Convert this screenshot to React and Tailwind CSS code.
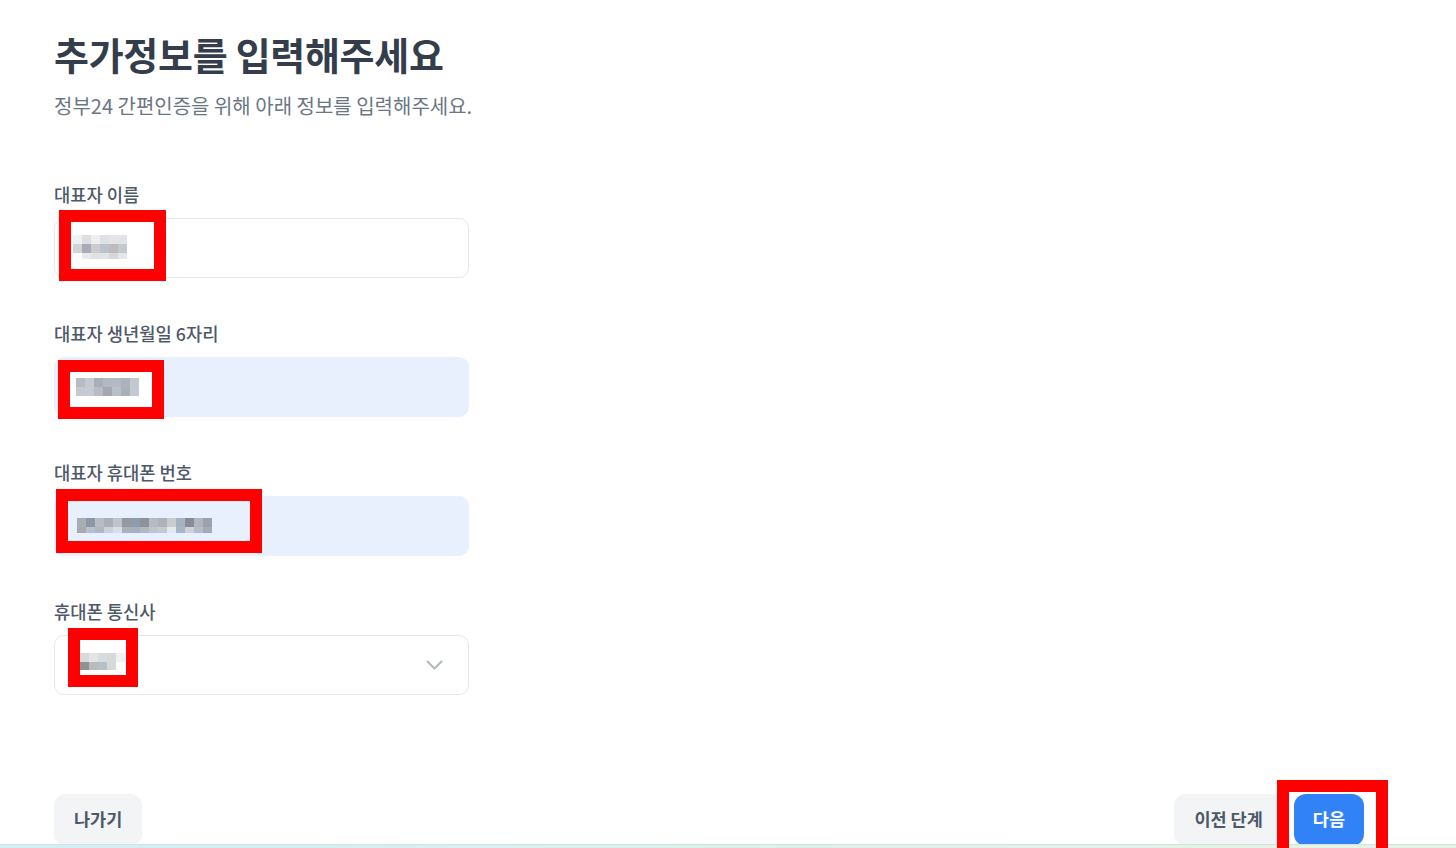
import React from "react";

function Pix({ rows, cell = 9, rowH, className }) {
  const cols = Math.max(...rows.map((r) => r.length));
  const hs = rowH || rows.map(() => cell);
  const total = hs.reduce((a, b) => a + b, 0);
  let y = 0;
  const out = [];
  rows.forEach((r, i) => {
    r.forEach((c, j) => {
      if (c) out.push(<rect key={i + "-" + j} x={j * cell} y={y} width={cell} height={hs[i]} fill={c} />);
    });
    y += hs[i];
  });
  return (
    <svg className={className} width={cols * cell} height={total} shapeRendering="crispEdges">
      {out}
    </svg>
  );
}

function Field({ label, children, className }) {
  return (
    <div className="flex flex-col">
      <label className="text-[17.7px] leading-[24px] font-medium text-[#4e5968]">{label}</label>
      <div className={"mt-[12px] h-[60px] w-[415px] rounded-[10px] border " + className}>{children}</div>
    </div>
  );
}

export default function App() {
  return (
    <div className="relative h-[848px] w-full overflow-hidden bg-white font-['Noto_Sans_CJK_KR','Noto_Sans',sans-serif]">
      <div className="flex h-full flex-col">
        <div className="px-[54px] pt-[27px]">
          <h1 className="text-[38px] leading-[53px] font-bold tracking-[-0.3px] text-[#333d4b]">추가정보를 입력해주세요</h1>
          <p className="mt-[12px] text-[20px] leading-[27px] text-[#6b7684]">정부24 간편인증을 위해 아래 정보를 입력해주세요.</p>

          <div className="mt-[63px] flex flex-col gap-[43px]">
            <Field label="대표자 이름" className="border-[#e5e8eb] bg-white" />
            <Field label="대표자 생년월일 6자리" className="border-[#e8f0fe] bg-[#e8f0fe]" />
            <Field label="대표자 휴대폰 번호" className="border-[#e8f0fe] bg-[#e8f0fe]" />
            <Field label="휴대폰 통신사" className="flex items-center justify-end border-[#e5e8eb] bg-white pr-[25px]">
              <svg width="17" height="11" viewBox="0 0 17 11" fill="none">
                <path d="M1.5 1.5 L8.5 8.5 L15.5 1.5" stroke="#b0b8c1" strokeWidth="2" strokeLinecap="round" strokeLinejoin="round" />
              </svg>
            </Field>
          </div>
        </div>

        <div className="mt-auto flex items-start justify-between pr-[92px] pb-[2px] pl-[54px]">
          <button className="h-[52px] rounded-[12px] bg-[#f2f4f6] px-[20px] pb-[2px] text-[17.5px] font-bold text-[#4e5968]">나가기</button>
          <div className="flex gap-[11px]">
            <button className="h-[52px] rounded-[12px] bg-[#f2f4f6] px-[20px] pb-[2px] text-[17.5px] font-bold text-[#4e5968]">이전 단계</button>
            <button className="h-[52px] rounded-[12px] bg-[#3182f6] px-[19px] pb-[2px] text-[17.5px] font-bold text-white">다음</button>
          </div>
        </div>
      </div>

      {/* bottom gradient strip */}
      <div className="absolute right-0 bottom-0 left-0 h-[4px] border-t border-[#cfe3e6] bg-gradient-to-r from-[#d4edf5] via-[#ddf1ea] to-[#e8f2e3]" />

      {/* redaction: name */}
      <div className="absolute top-[210px] left-[59px] h-[71px] w-[107px] border-[12px] border-[#ff0000] bg-white" />
      <Pix
        className="absolute top-[235px] left-[73px]"
        rowH={[9, 9, 6]}
        rows={[
          ["#eef0f2", "#dcdee2", "#eeeeec", "#dde0e7", "#e4e4e4", "#e0e4e8"],
          ["#d0d4d6", "#a9acb6", "#cacdd0", "#bcc1ca", "#bdbbbd", "#c3c9cc"],
          [null, "#e8e9ec", "#e0e1e3", "#e2e3e5", "#d6d7d9", "#e4e6ea"],
        ]}
      />

      {/* redaction: birth */}
      <div className="absolute top-[360px] left-[58px] h-[59px] w-[106px] border-[12px] border-[#ff0000] bg-white" />
      <Pix
        className="absolute top-[378px] left-[76px]"
        rows={[
          ["#b9bcc3", "#c5c9d0", "#a8afba", "#b3b8c1", "#b4bac5", "#aeb2bb", "#c4c8cf"],
          ["#c5c9d2", "#c6cad3", "#b7bcc5", "#a3a8b0", "#b8bfc9", "#aaafb8", "#c3c8d1"],
        ]}
      />

      {/* redaction: phone */}
      <div className="absolute top-[489px] left-[56px] h-[64px] w-[206px] border-[12px] border-[#ff0000]" />
      <Pix
        className="absolute top-[518px] left-[77px]"
        rowH={[9, 6]}
        rows={[
          ["#a9adb4", "#8c96a4", "#b8bcc4", "#aab0ba", "#bfc4cc", "#9399a2", "#8f9cab", "#8d939c", "#b6bac3", "#aeb3bb", "#c8cbd0", "#a8b3c2", "#868b96", "#b0b5be", "#9aa2ae"],
          ["#a7a9ad", "#b4bfcf", "#b3b7bf", "#c9d1dc", "#d9dee7", "#acb1b9", "#a4afbf", "#b2b7c0", "#bfc4cd", "#c4cad4", "#e4e8ef", "#aab5c5", "#ccd1da", "#b6bcc5", "#a3abb7"],
        ]}
      />

      {/* redaction: carrier */}
      <div className="absolute top-[628px] left-[68px] h-[59px] w-[70px] border-[12px] border-[#ff0000] bg-white" />
      <Pix
        className="absolute top-[653px] left-[80px]"
        rowH={[9, 8]}
        rows={[
          ["#d8dadc", "#e4e4e6", "#d6dde0", "#d7d9db", "#eef2f5"],
          ["#8f9194", "#b9bbbc", "#b4c1c6", "#d6d8da", null],
        ]}
        cell={9}
      />

      {/* redaction: next button */}
      <div className="absolute top-[780px] left-[1277px] h-[80px] w-[111px] border-[12px] border-[#ff0000]" />
    </div>
  );
}
